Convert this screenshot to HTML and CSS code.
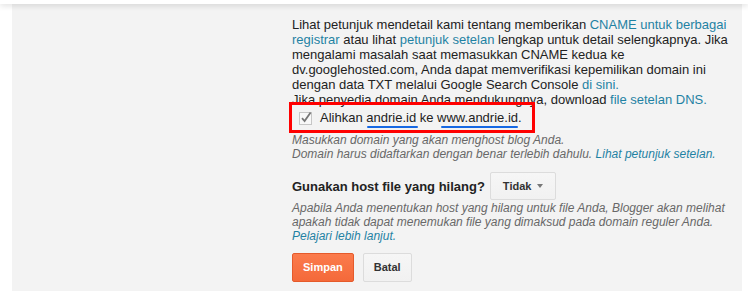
FILE: index.html
```html
<!DOCTYPE html>
<html lang="id">
<head>
<meta charset="utf-8">
<title>Setelan domain</title>
<link rel="stylesheet" href="styles.css">
</head>
<body>
<div class="topbar"></div>
<div class="page">
  <div class="panel">
    <div class="content">
      <p class="intro">Lihat petunjuk mendetail kami tentang memberikan <a href="#">CNAME untuk berbagai registrar</a> atau lihat <a href="#">petunjuk setelan</a> lengkap untuk detail selengkapnya. Jika mengalami masalah saat memasukkan CNAME kedua ke dv.googlehosted.com, Anda dapat memverifikasi kepemilikan domain ini dengan data TXT melalui Google Search Console <a href="#">di sini.</a><br>Jika penyedia domain Anda mendukungnya, download <a href="#">file setelan DNS.</a></p>
      <div class="redirect">
        <svg class="check" width="14" height="14" viewBox="0 0 14 14" aria-hidden="true">
          <rect x="0.5" y="1.5" width="12" height="12" fill="#f8f8f8" stroke="#c6c6c6"/>
          <path d="M3 7.2 L5.6 10 L11.6 1.6" fill="none" stroke="#767676" stroke-width="1.8"/>
        </svg>
        <span>Alihkan <span class="mark">andrie.id</span> ke <span class="mark mark-www">www.andrie.id</span>.</span>
      </div>
      <p class="hint">Masukkan domain yang akan menghost blog Anda.<br>Domain harus didaftarkan dengan benar terlebih dahulu. <a href="#">Lihat petunjuk setelan.</a></p>
      <div class="option">
        <span class="label">Gunakan host file yang hilang?</span>
        <span class="select">Tidak <span class="arrow"></span></span>
      </div>
      <p class="hint hint-block">Apabila Anda menentukan host yang hilang untuk file Anda, Blogger akan melihat apakah tidak dapat menemukan file yang dimaksud pada domain reguler Anda. <a href="#">Pelajari lebih lanjut.</a></p>
      <div class="actions">
        <button class="btn btn-primary" type="button">Simpan</button>
        <button class="btn" type="button">Batal</button>
      </div>
    </div>
  </div>
</div>
</body>
</html>
```

FILE: styles.css
```css
html, body {
  margin: 0;
  padding: 0;
  background: #ffffff;
}

body {
  font-family: "Liberation Sans", Arial, sans-serif;
  color: #222222;
}

.topbar {
  height: 4px;
  background: #ffffff;
  box-shadow: 0 1px 6px rgba(0, 0, 0, 0.18);
  position: relative;
  z-index: 1;
}

.page {
  padding: 0 6px 0 12px;
}

.panel {
  background: #f3f3f3;
  padding: 13px 0 9px 280px;
}

.content {
  width: 440px;
}

a {
  color: #1f82a3;
  text-decoration: none;
}

.intro {
  margin: 0;
  font-size: 13px;
  line-height: 15px;
}

.redirect {
  display: flex;
  align-items: center;
  width: 223px;
  margin: -5px 0 0 -3px;
  padding: 5px 10px 5px 7px;
  border: 3px solid #ff0000;
  font-size: 13px;
  line-height: 15px;
  position: relative;
}

.check {
  flex: none;
  margin-right: 7px;
}

.mark {
  position: relative;
}

.mark::after {
  content: "";
  position: absolute;
  left: 1px;
  right: -2px;
  bottom: -3px;
  height: 2px;
  border-radius: 2px;
  background: #1668e3;
}

.mark-www::after {
  left: 4px;
  right: 0;
}

.hint {
  margin: 0;
  font-size: 12px;
  line-height: 14px;
  font-style: italic;
  color: #686868;
}

.option {
  display: flex;
  align-items: center;
  gap: 5px;
  margin-top: 11px;
}

.label {
  font-size: 13px;
  font-weight: bold;
  color: #222222;
}

.select {
  display: inline-flex;
  align-items: center;
  gap: 6px;
  height: 26px;
  padding: 0 12px;
  border: 1px solid #dcdcdc;
  border-radius: 2px;
  background: linear-gradient(#f6f6f6, #f1f1f1);
  font-size: 11px;
  font-weight: bold;
  color: #333333;
}

.arrow {
  width: 0;
  height: 0;
  border-left: 3.5px solid transparent;
  border-right: 3.5px solid transparent;
  border-top: 4px solid #777777;
}

.hint-block {
  margin-top: 1px;
}

.actions {
  display: flex;
  gap: 9px;
  margin-top: 10px;
}

.btn {
  height: 29px;
  padding: 0 10px;
  border: 1px solid #dcdcdc;
  border-radius: 2px;
  background: linear-gradient(#f6f6f6, #f1f1f1);
  font-family: "Liberation Sans", Arial, sans-serif;
  font-size: 11px;
  font-weight: bold;
  color: #333333;
  line-height: 27px;
}

.btn-primary {
  background: linear-gradient(#fb7b4c, #f4693a);
  border-color: #e55a2b;
  color: #ffffff;
}
```
